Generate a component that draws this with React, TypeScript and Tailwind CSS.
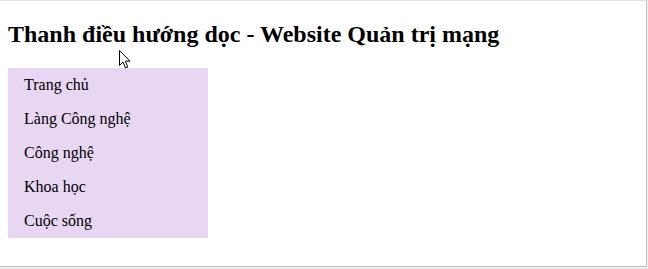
import React from "react";

const items = ["Trang chủ", "Làng Công nghệ", "Công nghệ", "Khoa học", "Cuộc sống"];

export default function App() {
  return (
    <div className="relative w-[648px] h-[269px] bg-[#eeeeee] overflow-hidden" style={{ fontFamily: '"Liberation Serif", "Times New Roman", serif' }}>
      <div className="w-[647px] h-[267px] bg-white border-t border-t-[#e3e3e3] border-r border-r-[#c4c4c4] border-b border-b-[#c4c4c4] px-2 pt-[19px]">
        <h2 className="text-[24px] leading-[28px] font-bold text-black m-0">
          Thanh điều hướng dọc - Website Quản trị mạng
        </h2>
        <ul className="mt-[20px] w-[200px] bg-[#e8d7f3] list-none p-0 m-0">
          {items.map((t) => (
            <li key={t}>
              <a className="block px-4 py-2 text-[16px] leading-[18px] text-black">{t}</a>
            </li>
          ))}
        </ul>
      </div>
      <svg className="absolute left-[119px] top-[50px]" width="14" height="20" viewBox="0 0 14 20">
        <path d="M0.5 0.5 L0.5 15.5 L4 12 L6.5 18 L8.8 17 L6.3 11.2 L11 11.2 Z" fill="white" stroke="black" strokeWidth="1" />
      </svg>
    </div>
  );
}
